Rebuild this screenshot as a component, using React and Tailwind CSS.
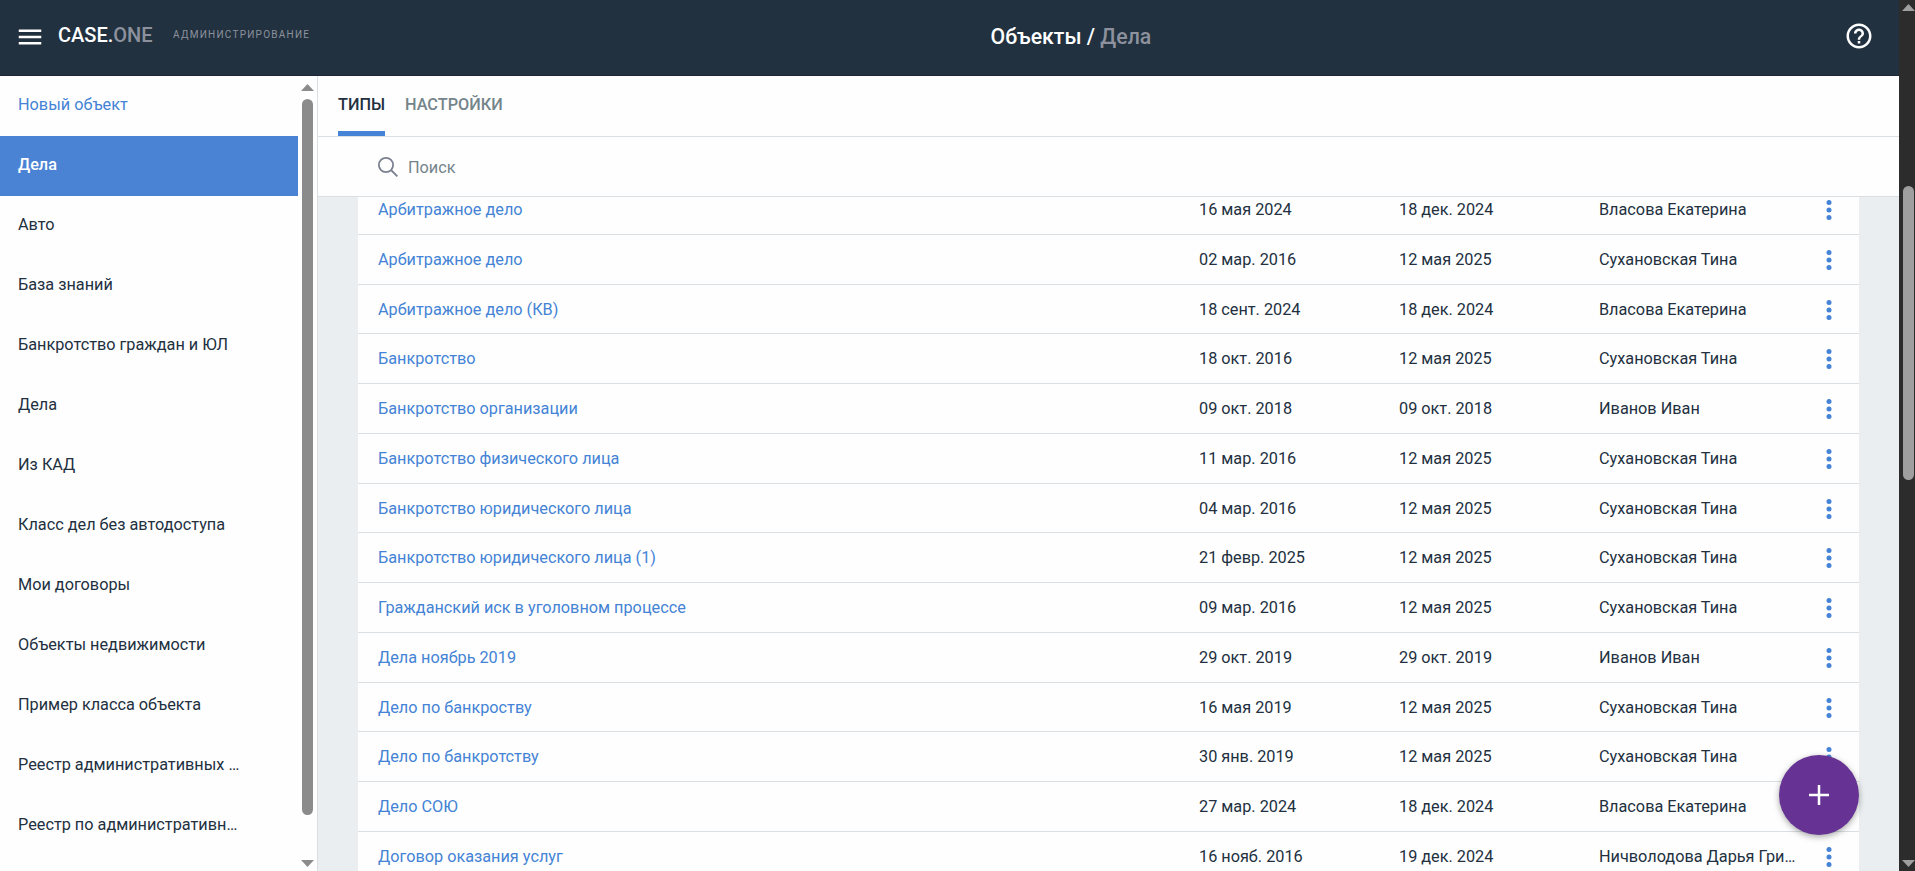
import { useState } from "react";

/* ================= DATA ================= */
const CLASSES = [
  "Дела",
  "Авто",
  "База знаний",
  "Банкротство граждан и ЮЛ",
  "Дела",
  "Из КАД",
  "Класс дел без автодоступа",
  "Мои договоры",
  "Объекты недвижимости",
  "Пример класса объекта",
  "Реестр административных …",
  "Реестр по административн…",
];

const TYPES = [
  { name: "Арбитражное дело", created: "16 мая 2024", updated: "18 дек. 2024", author: "Власова Екатерина" },
  { name: "Арбитражное дело", created: "02 мар. 2016", updated: "12 мая 2025", author: "Сухановская Тина" },
  { name: "Арбитражное дело (КВ)", created: "18 сент. 2024", updated: "18 дек. 2024", author: "Власова Екатерина" },
  { name: "Банкротство", created: "18 окт. 2016", updated: "12 мая 2025", author: "Сухановская Тина" },
  { name: "Банкротство организации", created: "09 окт. 2018", updated: "09 окт. 2018", author: "Иванов Иван" },
  { name: "Банкротство физического лица", created: "11 мар. 2016", updated: "12 мая 2025", author: "Сухановская Тина" },
  { name: "Банкротство юридического лица", created: "04 мар. 2016", updated: "12 мая 2025", author: "Сухановская Тина" },
  { name: "Банкротство юридического лица (1)", created: "21 февр. 2025", updated: "12 мая 2025", author: "Сухановская Тина" },
  { name: "Гражданский иск в уголовном процессе", created: "09 мар. 2016", updated: "12 мая 2025", author: "Сухановская Тина" },
  { name: "Дела ноябрь 2019", created: "29 окт. 2019", updated: "29 окт. 2019", author: "Иванов Иван" },
  { name: "Дело по банкроству", created: "16 мая 2019", updated: "12 мая 2025", author: "Сухановская Тина" },
  { name: "Дело по банкротству", created: "30 янв. 2019", updated: "12 мая 2025", author: "Сухановская Тина" },
  { name: "Дело СОЮ", created: "27 мар. 2024", updated: "18 дек. 2024", author: "Власова Екатерина" },
  { name: "Договор оказания услуг", created: "16 нояб. 2016", updated: "19 дек. 2024", author: "Ничволодова Дарья Гри…" },
];

/* ================= ICONS ================= */
const MenuIcon = () => (
  <svg viewBox="0 0 24 24" className="mb-[2px] size-[30px]" fill="currentColor">
    <path d="M3 18h18v-2H3v2zm0-5h18v-2H3v2zm0-7v2h18V6H3z" />
  </svg>
);

const HelpIcon = () => (
  <svg viewBox="0 0 24 24" className="size-[30px]" fill="currentColor">
    <path d="M11 18h2v-2h-2v2zm1-16C6.48 2 2 6.48 2 12s4.48 10 10 10 10-4.48 10-10S17.52 2 12 2zm0 18c-4.41 0-8-3.59-8-8s3.59-8 8-8 8 3.59 8 8-3.59 8-8 8zm0-14c-2.21 0-4 1.79-4 4h2c0-1.1.9-2 2-2s2 .9 2 2c0 2-3 1.75-3 5h2c0-2.25 3-2.5 3-5 0-2.21-1.79-4-4-4z" />
  </svg>
);

const SearchIcon = () => (
  <svg viewBox="0 0 20 20" className="size-5" fill="none" stroke="currentColor" strokeWidth="1.8">
    <circle cx="8" cy="8" r="7.1" />
    <path d="M13 13l6.4 6.4" />
  </svg>
);

const DotsIcon = () => (
  <svg viewBox="0 0 24 24" className="size-[30px]" fill="currentColor">
    <circle cx="12" cy="6" r="2" />
    <circle cx="12" cy="12" r="2" />
    <circle cx="12" cy="18" r="2" />
  </svg>
);

const Arrow = ({ down }) => (
  <svg viewBox="0 0 13 7" className="h-[7px] w-[13px] shrink-0" fill="currentColor">
    <path d={down ? "M0 0h13L6.5 7z" : "M0 7h13L6.5 0z"} />
  </svg>
);

/* ================= SIDEBAR ================= */
const Sidebar = ({ active, onSelect }) => (
  <aside className="flex w-[318px] shrink-0 border-r border-[#d9dfe3] bg-[#fefefe]">
    <nav className="w-[298px] shrink-0">
      <a className="flex h-[60px] items-center px-[18px] pb-[2px] text-[#4483d5]">Новый объект</a>
      {CLASSES.map((name, i) => (
        <button
          key={i}
          onClick={() => onSelect(i)}
          className={`flex h-[60px] w-full items-center pb-[2px] pl-[18px] text-left whitespace-nowrap ${
            i === active ? "bg-[#4b83d4] font-medium text-white" : ""
          }`}
        >
          {name}
        </button>
      ))}
    </nav>
    <div className="flex flex-1 flex-col items-center pt-2 pr-[1px] pb-1 text-[#8b8b8b]">
      <Arrow />
      <div className="mt-2 h-[716px] w-[11px] rounded-full bg-[#8b8b8b]" />
      <div className="mt-auto flex">
        <Arrow down />
      </div>
    </div>
  </aside>
);

/* ================= TABLE ROW ================= */
const TypeRow = ({ row }) => (
  <div className="grid h-[49.75px] grid-cols-[821px_200px_200px_215px_30px] items-center border-b border-[#d9dfe3] bg-[#fefefe] pt-[1.1px] pl-5 whitespace-nowrap">
    <a className="text-[#4483d5]">{row.name}</a>
    <span>{row.created}</span>
    <span>{row.updated}</span>
    <span>{row.author}</span>
    <button className="text-[#4483d5]">
      <DotsIcon />
    </button>
  </div>
);

/* ================= APP ================= */
const App = () => {
  const [active, setActive] = useState(0);

  return (
    <div className="flex h-[871px] w-full overflow-hidden bg-[#eaeef1] font-[Roboto,sans-serif] text-[16.25px] leading-6 text-[#22303f]">
      <div className="flex min-w-0 flex-1 flex-col">
        {/* HEADER */}
        <header className="flex h-[76px] shrink-0 items-center border-b border-[#1f2438] bg-[#22313f] text-white">
          <div className="flex w-[990.5px] items-center pl-[15.25px]">
            <MenuIcon />
            <span className="ml-[12.75px] pb-[5px] text-xl font-medium">
              CASE.<span className="text-[#8d919e]">ONE</span>
            </span>
            <span className="ml-[20.5px] pb-[5px] text-[10px] tracking-[1.25px] text-[#8d919e]">АДМИНИСТРИРОВАНИЕ</span>
          </div>
          <h1 className="pb-[2px] text-[21.25px] font-medium">
            Объекты / <span className="text-[#8d919e]">Дела</span>
          </h1>
          <button className="mr-[25px] mb-[3px] ml-auto">
            <HelpIcon />
          </button>
        </header>

        <div className="flex min-h-0 flex-1">
          <Sidebar active={active} onSelect={setActive} />

          <main className="relative flex min-w-0 flex-1 flex-col">
            {/* TABS */}
            <div className="flex h-[61px] shrink-0 gap-5 border-b border-[#d9dfe3] bg-[#fefefe] pl-5 font-medium">
              <button className="flex h-[60px] items-center border-b-[5px] border-[#4483d5] pt-[3px]">ТИПЫ</button>
              <button className="flex h-[60px] items-center pb-[2px] text-[#74848a]">НАСТРОЙКИ</button>
            </div>

            {/* SEARCH */}
            <div className="flex h-[60px] shrink-0 items-center gap-[10px] border-b border-[#d9dfe3] bg-[#fefefe] pl-[60px]">
              <span className="text-[#7b8090]">
                <SearchIcon />
              </span>
              <span className="pt-[2px] text-[#74848a]">Поиск</span>
            </div>

            {/* TYPES */}
            <div className="min-h-0 flex-1 overflow-hidden px-10">
              <div className="-mt-[11.85px]">
                {TYPES.map((row, i) => (
                  <TypeRow key={i} row={row} />
                ))}
              </div>
            </div>

            {/* ADD BUTTON */}
            <button className="absolute right-10 bottom-9 flex size-20 items-center justify-center rounded-full bg-[#663395] text-white shadow-[0_2px_6px_rgba(0,0,0,0.35)]">
              <svg viewBox="0 0 20 20" className="size-5" stroke="currentColor" strokeWidth="2.5">
                <path d="M10 0v20M0 10h20" />
              </svg>
            </button>
          </main>
        </div>
      </div>

      {/* PAGE SCROLLBAR */}
      <div className="flex w-4 shrink-0 flex-col items-end bg-[#2c2c2c] pt-1 pb-1 text-[#9f9f9f]">
        <Arrow />
        <div className="mt-[175px] mr-[1px] h-[294px] w-[11px] rounded-full bg-[#9f9f9f]" />
        <div className="mt-auto flex">
          <Arrow down />
        </div>
      </div>
    </div>
  );
};

export default App;
